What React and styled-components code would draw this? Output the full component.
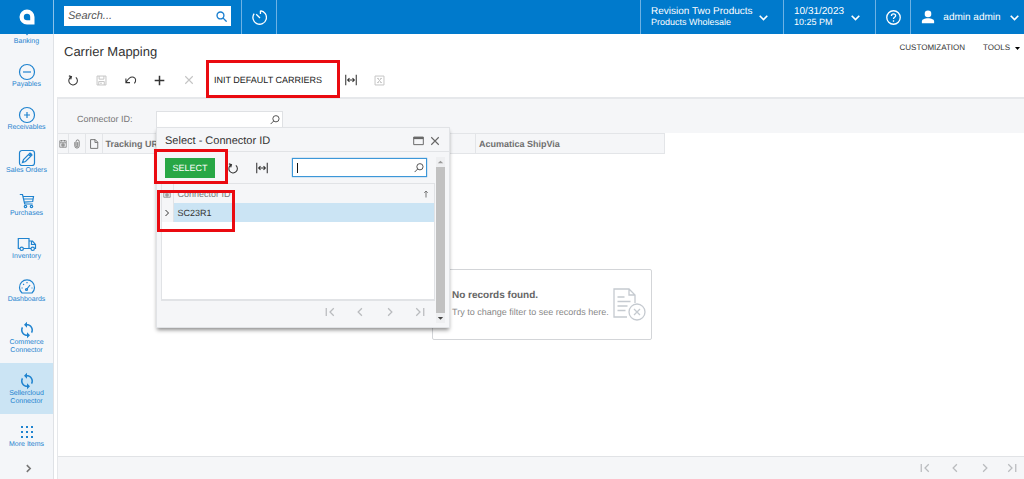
import React from 'react';
import styled, { createGlobalStyle, css } from 'styled-components';

const GlobalStyle = createGlobalStyle`
    * {
        box-sizing: border-box;
    }
    body {
        margin: 0;
        background: #fff;
        color: #333;
        font-family: "Liberation Sans", Arial, sans-serif;
        font-size: 9px;
        text-rendering: geometricPrecision;
    }
    button, input {
        font-family: inherit;
        text-rendering: inherit;
    }
`

const Page = styled.div`
    display: flex;
    flex-direction: column;
    height: 100vh;
`

const Header = styled.header`
    display: flex;
    flex: none;
    height: 34px;
    background: #007acc;
    color: #fff;
`
const Logo = styled.a`
    display: flex;
    align-items: center;
    justify-content: center;
    width: 54px;
    border-right: 1px solid #8ac2ea;
`
const SearchBox = styled.label`
    display: flex;
    align-items: center;
    align-self: flex-start;
    width: 167px;
    height: 20px;
    margin: 6px 10px;
    padding: 0 4px;
    background: #fff;
    color: #1a7fd0;
    input {
        flex: 1;
        min-width: 0;
        padding: 0;
        border: 0;
        outline: 0;
        font-size: 11px;
        font-style: italic;
    }
    input::placeholder {
        color: #555;
    }
`
const HeaderButton = styled.button`
    display: flex;
    align-items: center;
    justify-content: ${p => p.$between ? 'space-between' : 'center'};
    width: ${p => p.$width}px;
    padding: ${p => p.$between ? '0 14px 0 10px' : '0'};
    border: 0;
    border-left: 1px solid #6db2e4;
    background: none;
    color: #fff;
    font-size: 10px;
    text-align: left;
    cursor: pointer;
    &:last-child {
        padding-right: 4px;
    }
`
const HeaderGap = styled.div`
    flex: 1;
    border-left: 1px solid #6db2e4;
`
const TwoLines = styled.span`
    display: flex;
    flex-direction: column;
    line-height: 11px;
    small {
        font-size: 9px;
    }
`

const Body = styled.div`
    display: flex;
    flex: 1;
    min-height: 0;
`
const Sidebar = styled.aside`
    display: flex;
    flex: none;
    flex-direction: column;
    width: 54px;
    background: #f4f6f9;
    border-right: 1px solid #dfe2e6;
`
const Nav = styled.nav`
    display: flex;
    flex: 1;
    flex-direction: column;
    justify-content: flex-end;
    min-height: 0;
    overflow: hidden;
`
const NavItem = styled.a`
    display: flex;
    flex: none;
    flex-direction: column;
    align-items: center;
    gap: 1px;
    padding: 10px 0 8px;
    background: ${p => p.$active ? '#cbe4f4' : 'none'};
    color: #1f83cf;
    font-size: 7px;
    line-height: 8px;
    text-align: center;
    text-decoration: none;
    svg {
        overflow: visible;
    }
    span {
        width: 46px;
    }
`
const NavMore = styled.button`
    display: flex;
    align-items: center;
    justify-content: center;
    height: 22px;
    padding: 0 0 0 4px;
    border: 0;
    background: none;
    color: #777;
`

const Main = styled.main`
    display: flex;
    flex: 1;
    flex-direction: column;
    min-width: 0;
    padding-left: 3px;
`
const TitleBar = styled.div`
    display: flex;
    align-items: flex-start;
    height: 29px;
    padding: 9px 4px 0 7px;
`
const Title = styled.h1`
    flex: 1;
    margin: 0;
    color: #333;
    font-size: 13px;
    font-weight: normal;
    line-height: 18px;
`
const TextButton = styled.button`
    display: flex;
    align-items: center;
    gap: 5px;
    padding: 0;
    margin-left: 18px;
    border: 0;
    background: none;
    color: #333;
    font-size: 8px;
    line-height: 10px;
`
const Toolbar = styled.div`
    display: flex;
    align-items: center;
    height: 34px;
    padding-left: 1px;
`
const ToolButton = styled.button`
    display: flex;
    align-items: center;
    justify-content: center;
    width: ${p => p.$width || 29}px;
    height: 24px;
    padding: 0;
    border: 0;
    background: none;
    color: #333;
    &:disabled {
        color: #c4c4c4;
    }
`
const CarriersButton = styled.button`
    position: relative;
    height: 24px;
    padding: 0 14px 0 11px;
    border: 0;
    background: none;
    color: #222;
    font-size: 9px;
    white-space: nowrap;
`
const Highlight = styled.span`
    position: absolute;
    z-index: 3;
    inset: ${p => p.$inset};
    border: 3px solid #ea0a10;
    pointer-events: none;
`

const Filter = styled.section`
    display: flex;
    align-items: flex-start;
    flex: none;
    height: 36px;
    padding: 12px 19px 0;
    background: #f5f6f8;
    border: solid #e6e8eb;
    border-width: 2px 0 0 1px;
    label {
        width: 79px;
        color: #777;
        font-size: 9px;
        line-height: 16px;
    }
`
const Selector = styled.div`
    position: relative;
    width: 127px;
`
const LookupField = styled.div`
    display: flex;
    align-items: center;
    height: ${p => p.$focused ? 19 : 17}px;
    padding: 0 2px 0 3px;
    background: #fff;
    border: 1px solid #dfe1e4;
    color: #555;
    ${p => p.$focused && css`
        width: 135px;
        border-color: #3c97d8;
        box-shadow: 0 0 1px #3c97d8;
    `}
    input {
        flex: 1;
        min-width: 0;
        padding: 0;
        border: 0;
        outline: 0;
        background: none;
        font-size: 11px;
    }
`
const Caret = styled.span`
    width: 1px;
    height: 10px;
    margin-left: 1px;
    background: #111;
`

const Grid = styled.section`
    display: flex;
    flex: 1;
    flex-direction: column;
    min-height: 0;
    border-left: 1px solid #e6e8eb;
`
const GridTable = styled.table`
    width: 607px;
    table-layout: fixed;
    border-collapse: collapse;
    background: #f5f6f8;
    th {
        height: 20px;
        padding: 0 3px;
        border: solid #e3e5e8;
        border-width: 1px 1px 1px 0;
        color: #6f6f6f;
        font-size: 9px;
        text-align: left;
        white-space: nowrap;
    }
    th svg {
        display: block;
        margin: 0 auto;
    }
    th.icon {
        padding: 0;
    }
`
const Empty = styled.div`
    display: flex;
    flex: 1;
    align-items: center;
    justify-content: center;
    padding: 0 0 2px 2px;
`
const EmptyCard = styled.div`
    display: flex;
    align-items: center;
    justify-content: space-between;
    width: 220px;
    height: 71px;
    padding: 0 5px 0 19px;
    border: 1px solid #d3d5d8;
    border-radius: 2px;
    color: #888;
    font-size: 9px;
    line-height: 17px;
    white-space: nowrap;
    strong {
        display: block;
        color: #666;
        font-size: 10px;
    }
`
const Pager = styled.footer`
    display: flex;
    flex: none;
    justify-content: flex-end;
    height: 23px;
    background: #f5f6f8;
    border-top: 1px solid #e1e3e6;
    color: #b9bbbe;
`
const PagerButton = styled.button`
    display: flex;
    align-items: center;
    justify-content: center;
    width: 30px;
    padding: 0;
    border: 0;
    background: none;
    color: inherit;
    ${Grid} > ${Pager} &:last-child {
        width: 24px;
    }
`

const Dialog = styled.div`
    position: absolute;
    z-index: 2;
    top: 16px;
    left: 0;
    width: 294px;
    background: #f5f6f8;
    border: 1px solid #e1e3e6;
    box-shadow: 0 3px 4px -1px rgba(0, 0, 0, .45);
`
const DialogHead = styled.div`
    display: flex;
    align-items: center;
    height: 24px;
    padding: 2px 7px 0 8px;
    border-bottom: 1px solid #e1e3e6;
    h2 {
        flex: 1;
        margin: 0;
        color: #333;
        font-size: 11px;
        font-weight: normal;
    }
    button {
        color: #666;
    }
`
const DialogBody = styled.div`
    display: flex;
    padding: 5px 4px 4px;
`
const DialogContent = styled.div`
    flex: 1;
`
const DialogTools = styled.div`
    display: flex;
    align-items: center;
    justify-content: space-between;
    height: 26px;
    padding: 0 8px 5px 4px;
    div {
        display: flex;
        align-items: center;
    }
`
const SelectButton = styled.button`
    position: relative;
    width: 50px;
    height: 20px;
    padding: 0;
    border: 0;
    background: #28a745;
    color: #fff;
    font-size: 9px;
`
const ResultBox = styled.div`
    position: relative;
    height: 117px;
    background: #fff;
    border: 1px solid #e1e3e6;
`
const ResultTable = styled.table`
    width: 100%;
    table-layout: fixed;
    border-collapse: collapse;
    font-size: 9px;
    th, td {
        height: 19px;
        padding: 0 4px;
        text-align: left;
        font-weight: normal;
    }
    th {
        background: #f5f6f8;
        color: #777;
    }
    td {
        background: #cbe4f4;
        color: #333;
    }
    th:first-child, td:first-child {
        width: 11px;
        padding: 0;
        background: #f5f6f8;
        border-right: 1px solid #e1e3e6;
    }
    svg {
        display: block;
        margin: 0 auto;
    }
    th div {
        display: flex;
        align-items: center;
        justify-content: space-between;
    }
    th div svg {
        margin: 0;
    }
`
const ScrollBar = styled.div`
    display: flex;
    flex-direction: column;
    width: 9px;
    margin-left: 1px;
    background: #eeeff1;
    color: #555;
    svg {
        display: block;
    }
`
const Thumb = styled.div`
    flex: 1;
    background: #c1c1c1;
`

const shapes = {
    refresh: <path d="M11.800 4.500A5.700 5.700 0 1 1 5.200 4M2.500 2.500L6 3.500 5 7.200" />,
    save: <path d="M1.500 1.500h13v13h-13zM4.500 1.500v4.500h7v-4.500M4 14.500v-5h8v5M6 12h2.500" />,
    undo: <path d="M1.200 6v5.500h5.500M1.500 11C4.500 5.500 8 3 11.500 4.200c3.300 1.300 3.500 5.300 1 8.300" />,
    plus: <path d="M8 1v14M1 8h14" />,
    close: <path d="M2 2l12 12M14 2L2 14" />,
    fit: <path d="M1 1v14M15 1v14M3 8h10M6 5.500L3.500 8l2.500 2.500M10 5.500l2.500 2.500-2.500 2.500" />,
    excel: <path d="M1.500 1.500h13v13h-13zM5.500 5l5 6M10.500 5l-5 6M4.500 5h2.500M9 5h2.500M4.500 11h2.500M9 11h2.500" />,
    search: <><circle cx="6.500" cy="6.500" r="5" /><path d="M10 10l5.500 5.500" /></>,
    lookup: <><circle cx="9.500" cy="6" r="5" /><path d="M6 9.500L1 14.500" /></>,
    down: <path d="M2.500 5.500L8 11l5.500-5.500" />,
    left: <path d="M11 2L5 8l6 6" />,
    right: <path d="M5 2l6 6-6 6" />,
    first: <path d="M2 1.500v13M14 2L8 8l6 6" />,
    last: <path d="M14 1.500v13M2 2l6 6-6 6" />,
    up: <path d="M8 15V2M4.500 5.500L8 2l3.500 3.500" />,
    window: <><path d="M1 3h14v11h-14z" /><path d="M1 4.500h14" strokeWidth="3" /></>,
    clip: <path d="M4.500 5v6a3.500 3.500 0 0 0 7 0V4a2.500 2.500 0 0 0-5 0v7a1.300 1.300 0 0 0 2.600 0V5" />,
    page: <path d="M2.500 1h7.500l4 4v10h-11.500zM9.500 1v4.500h4.500" />,
    rows: <path d="M1.500 1.500h13v13h-13zM2 5.500h12M5 0v3M11 0v3M4 8.500h8M4 11.500h8M8 5.500v9" />,
    help: <><circle cx="8" cy="8" r="7.200" /><path d="M5.800 6.300c0-3 4.500-2.800 4.500-.2 0 1.700-2.300 1.700-2.300 3.400M8 11v1.400" /></>,
    clock: <path d="M9 .8v3.500M9 .8a7.200 7.200 0 1 1-6.700 3M8.500 8.500L4.500 4.500" />,
    user: <g fill="currentColor" stroke="none"><circle cx="8" cy="4.500" r="3.800" /><path d="M1 15v-2c0-2 3-3.500 7-3.500s7 1.500 7 3.500v2z" /></g>,
    banking: <path d="M8 13.500l-2.500-3.500h5z" fill="currentColor" />,
    payables: <><circle cx="8" cy="8" r="7.500" /><path d="M4 8h8" /></>,
    receivables: <><circle cx="8" cy="8" r="7.500" /><path d="M5 8h6M8 5v6" /></>,
    orders: <><rect x=".5" y=".5" width="15" height="15" rx="2.500" /><path d="M3.500 12.500l1-3 6.500-6.500 2 2-6.500 6.500zM9.500 4.500l2 2" /><path d="M11 3.500l1.500 1.500" strokeWidth="2" /></>,
    purchases: <><path d="M.8 1.500h2.700l2.200 9.500h8M4 3.500h10.500L13.700 8.500 5.300 9.200M4.600 6h9.300" /><circle cx="6.500" cy="13.500" r="1.200" /><circle cx="12.500" cy="13.500" r="1.200" /></>,
    inventory: <><path d="M1 12.500H-.7v-10H10v10H4.500M10 5h3.500l3 3.500v4H15.500M12 12.500h-2M12.500 5v3.500h4" /><circle cx="2.700" cy="12.800" r="1.700" /><circle cx="13.700" cy="12.800" r="1.700" /></>,
    dashboards: <><path d="M3 14a7.500 7.500 0 1 1 10 0z" /><path d="M7.500 10.500L11 6M2.500 9h1.200M12.500 9h1M8 3v1.200M4.200 5l.8.800" /><circle cx="7.500" cy="10.500" r="1" /></>,
    sync: (
        <g transform="translate(-1 -1) scale(.75)" fill="currentColor" stroke="none">
            <path d="M12 4V1L8 5l4 4V6c3.310 0 6 2.690 6 6 0 1.010-.25 1.970-.7 2.800l1.460 1.460A7.930 7.930 0 0 0 20 12c0-4.420-3.580-8-8-8z" />
            <path d="M12 18c-3.310 0-6-2.690-6-6 0-1.010.25-1.970.7-2.800L5.240 7.740A7.930 7.930 0 0 0 4 12c0 4.420 3.580 8 8 8v3l4-4-4-4z" />
        </g>
    ),
    more: <path d="M2 3h2M7 3h2M12 3h2M2 8h2M7 8h2M12 8h2M2 13h2M7 13h2M12 13h2" strokeWidth="2" />,
}

function Icon({ name, size = 12, stroke = 1.4 }) {
    return (
        <svg width={size} height={size} viewBox="0 0 16 16" fill="none" stroke="currentColor" strokeWidth={stroke} aria-hidden="true">
            {shapes[name]}
        </svg>
    );
}

const navItems = [
    ['banking', 'Banking'],
    ['payables', 'Payables'],
    ['receivables', 'Receivables'],
    ['orders', 'Sales Orders'],
    ['purchases', 'Purchases'],
    ['inventory', 'Inventory'],
    ['dashboards', 'Dashboards'],
    ['sync', 'Commerce Connector'],
    ['sync', 'Sellercloud Connector', true],
    ['more', 'More Items'],
]

function PagerButtons() {
    return ['first', 'left', 'right', 'last'].map(name => (
        <PagerButton key={name} aria-label={name}><Icon name={name} size={10} stroke={2} /></PagerButton>
    ));
}

function ConnectorDialog() {
    return (
        <Dialog role="dialog" aria-label="Select - Connector ID">
            <DialogHead>
                <h2>Select - Connector ID</h2>
                <ToolButton $width={18} aria-label="Maximize"><Icon name="window" size={11} /></ToolButton>
                <ToolButton $width={15} aria-label="Close"><Icon name="close" size={10} stroke={1.8} /></ToolButton>
            </DialogHead>
            <DialogBody>
                <DialogContent>
                    <DialogTools>
                        <div>
                            <SelectButton>SELECT<Highlight $inset="-9px -13px -6px -11px" /></SelectButton>
                            <ToolButton $width={36} aria-label="Refresh"><Icon name="refresh" /></ToolButton>
                            <ToolButton $width={22} aria-label="Fit columns"><Icon name="fit" /></ToolButton>
                        </div>
                        <LookupField $focused>
                            <Caret />
                            <input aria-label="Search connectors" />
                            <Icon name="lookup" size={10} stroke={1.6} />
                        </LookupField>
                    </DialogTools>
                    <ResultBox>
                        <ResultTable>
                            <thead>
                                <tr>
                                    <th><Icon name="rows" size={8} /></th>
                                    <th><div>Connector ID<Icon name="up" size={8} stroke={2} /></div></th>
                                </tr>
                            </thead>
                            <tbody>
                                <tr>
                                    <td><Icon name="right" size={8} stroke={2} /></td>
                                    <td>SC23R1</td>
                                </tr>
                            </tbody>
                        </ResultTable>
                        <Highlight $inset="6px 199px 67px -5px" />
                    </ResultBox>
                    <Pager as="div"><PagerButtons /></Pager>
                </DialogContent>
                <ScrollBar>
                    <svg width="9" height="10" viewBox="0 0 10 10" fill="#999"><path d="M2 6.500h6L5 3.500z" /></svg>
                    <Thumb />
                    <svg width="9" height="10" viewBox="0 0 10 10" fill="#444"><path d="M2 4h6L5 7z" /></svg>
                </ScrollBar>
            </DialogBody>
        </Dialog>
    );
}

function App() {
    return (
        <Page>
            <GlobalStyle />
            <Header>
                <Logo href="#" aria-label="Home">
                    <svg width="16" height="16" viewBox="0 0 16 16">
                        <path d="M8 .5A7.500 7.500 0 1 0 8 15.500h7.500V8A7.500 7.500 0 0 0 8 .5z" fill="#fff" />
                        <path d="M8 4.800A3.200 3.200 0 1 0 8 11.200h3.200V8A3.200 3.200 0 0 0 8 4.800z" fill="#007acc" />
                    </svg>
                </Logo>
                <SearchBox>
                    <input type="text" placeholder="Search..." aria-label="Search" />
                    <Icon name="search" size={11} stroke={2} />
                </SearchBox>
                <HeaderButton $width={35} aria-label="Recent"><Icon name="clock" size={15} /></HeaderButton>
                <HeaderGap />
                <HeaderButton $width={143} $between>
                    <TwoLines>Revision Two Products<small>Products Wholesale</small></TwoLines>
                    <Icon name="down" size={11} stroke={2.4} />
                </HeaderButton>
                <HeaderButton $width={92} $between>
                    <TwoLines>10/31/2023<small>10:25 PM</small></TwoLines>
                    <Icon name="down" size={11} stroke={2.4} />
                </HeaderButton>
                <HeaderButton $width={35} aria-label="Help"><Icon name="help" size={15} /></HeaderButton>
                <HeaderButton $width={114} $between>
                    <Icon name="user" size={14} />
                    admin admin
                    <Icon name="down" size={11} stroke={2.4} />
                </HeaderButton>
            </Header>
            <Body>
                <Sidebar>
                    <Nav>
                        {navItems.map(([icon, label, active]) => (
                            <NavItem key={label} href="#" $active={active}>
                                <Icon name={icon} size={16} stroke={1.2} />
                                <span>{label}</span>
                            </NavItem>
                        ))}
                    </Nav>
                    <NavMore aria-label="Expand menu"><Icon name="right" size={9} stroke={2.8} /></NavMore>
                </Sidebar>
                <Main>
                    <TitleBar>
                        <Title>Carrier Mapping</Title>
                        <TextButton>CUSTOMIZATION</TextButton>
                        <TextButton>
                            TOOLS
                            <svg width="5" height="3" viewBox="0 0 5 3"><path d="M0 0h5L2.500 3z" /></svg>
                        </TextButton>
                    </TitleBar>
                    <Toolbar>
                        <ToolButton aria-label="Refresh"><Icon name="refresh" /></ToolButton>
                        <ToolButton disabled aria-label="Save"><Icon name="save" size={11} /></ToolButton>
                        <ToolButton aria-label="Undo"><Icon name="undo" /></ToolButton>
                        <ToolButton aria-label="Add"><Icon name="plus" size={11} stroke={2.2} /></ToolButton>
                        <ToolButton disabled aria-label="Delete"><Icon name="close" size={10} stroke={1.8} /></ToolButton>
                        <CarriersButton>INIT DEFAULT CARRIERS<Highlight $inset="-8px -4px -6px 3px" /></CarriersButton>
                        <ToolButton aria-label="Fit columns"><Icon name="fit" /></ToolButton>
                        <ToolButton disabled aria-label="Export to Excel"><Icon name="excel" size={11} /></ToolButton>
                    </Toolbar>
                    <Filter>
                        <label htmlFor="connector">Connector ID:</label>
                        <Selector>
                            <LookupField>
                                <input id="connector" type="text" />
                                <Icon name="lookup" size={10} stroke={1.6} />
                            </LookupField>
                            <ConnectorDialog />
                        </Selector>
                    </Filter>
                    <Grid>
                        <GridTable>
                            <colgroup>
                                <col width="10" />
                                <col width="17" />
                                <col width="17" />
                                <col />
                                <col width="189" />
                            </colgroup>
                            <thead>
                                <tr>
                                    <th className="icon"><Icon name="rows" size={8} /></th>
                                    <th className="icon"><Icon name="clip" size={10} /></th>
                                    <th className="icon"><Icon name="page" size={10} stroke={1.5} /></th>
                                    <th>Tracking URL</th>
                                    <th>Acumatica ShipVia</th>
                                </tr>
                            </thead>
                        </GridTable>
                        <Empty>
                            <EmptyCard>
                                <div>
                                    <strong>No records found.</strong>
                                    Try to change filter to see records here.
                                </div>
                                <svg width="34" height="34" viewBox="0 0 34 34" fill="none" stroke="#c5cad0" strokeWidth="1.300">
                                    <path d="M15 30H2V2h15l6 6v8M17 2v6h6M5.500 10h7M5.500 14.500h13M5.500 19h10M5.500 23.500h8" />
                                    <circle cx="25" cy="25" r="8" />
                                    <path d="M22 22l6 6M28 22l-6 6" />
                                </svg>
                            </EmptyCard>
                        </Empty>
                        <Pager><PagerButtons /></Pager>
                    </Grid>
                </Main>
            </Body>
        </Page>
    );
}

export default App;
